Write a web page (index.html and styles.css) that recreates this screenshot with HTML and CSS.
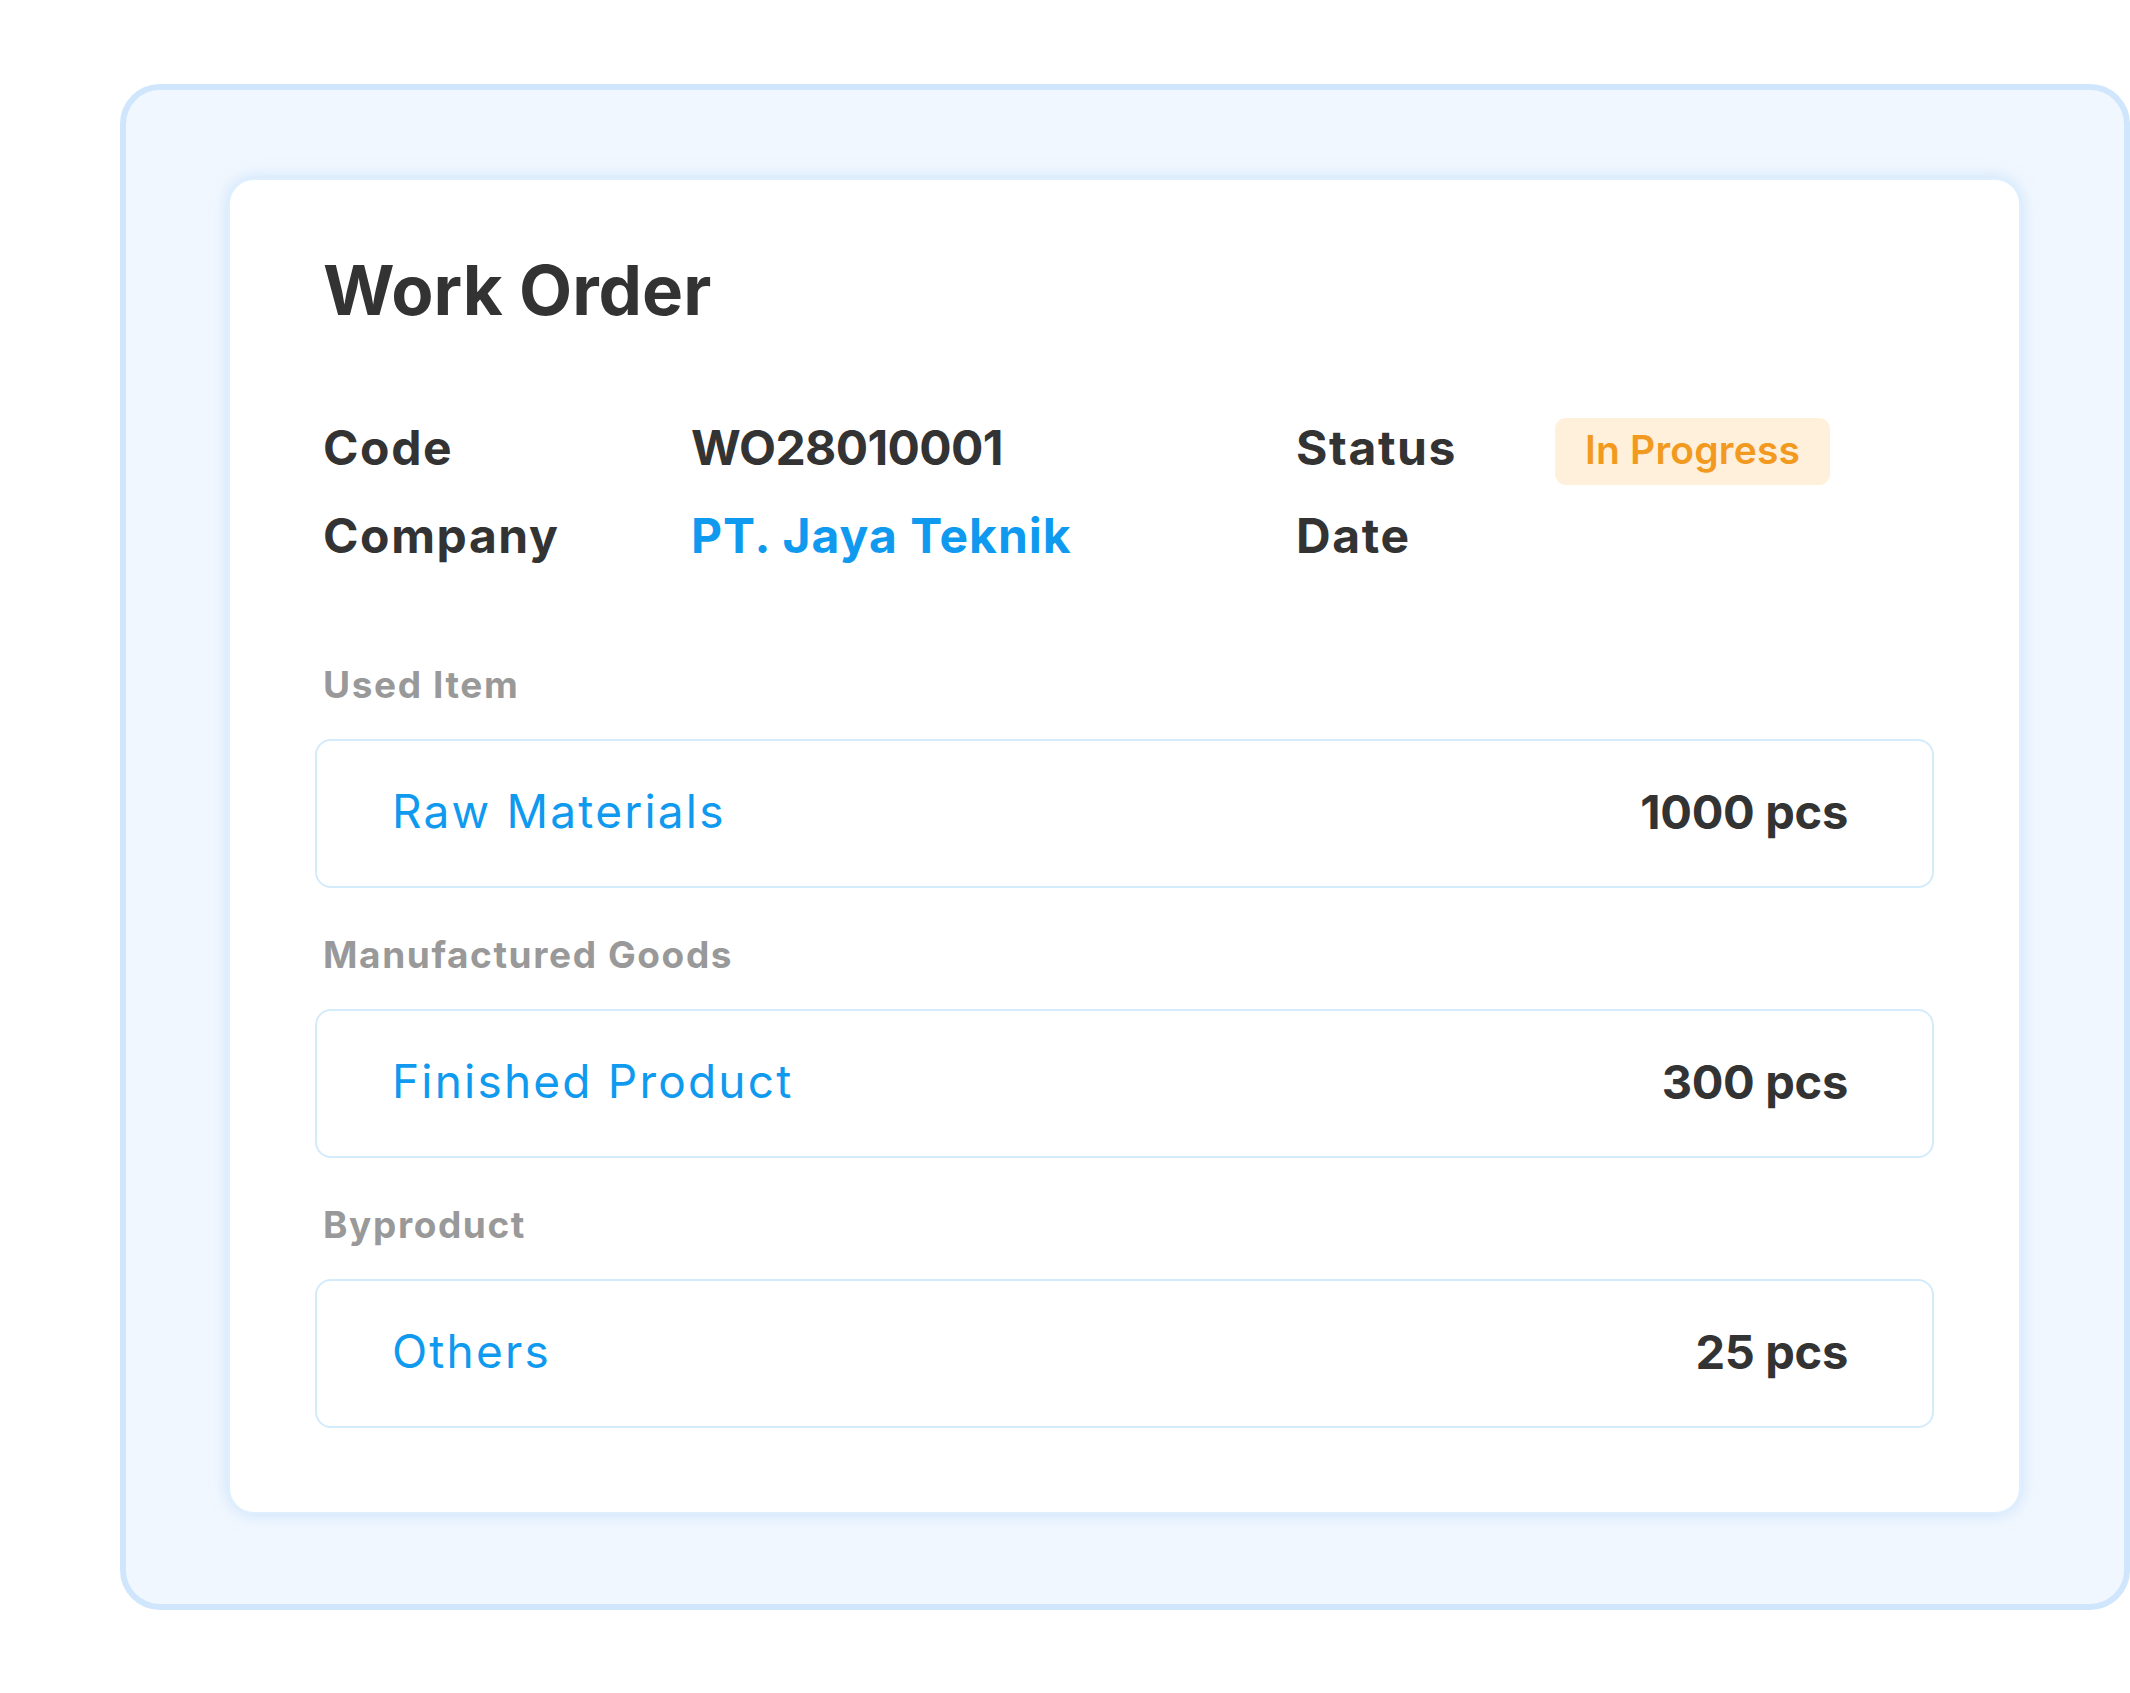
FILE: index.html
```html
<!DOCTYPE html>
<html lang="en">
<head>
<meta charset="utf-8">
<title>Work Order</title>
<link rel="stylesheet" href="styles.css">
</head>
<body>
<div class="frame">
  <section class="card">
    <h1 class="title">Work Order</h1>
    <div class="info">
      <div class="info-label">Code</div>
      <div class="info-value">WO28010001</div>
      <div class="info-label">Status</div>
      <div class="info-extra"><span class="badge">In Progress</span></div>
      <div class="info-label">Company</div>
      <div class="info-value link">PT. Jaya Teknik</div>
      <div class="info-label">Date</div>
      <div class="info-extra"></div>
    </div>

    <div class="section-label">Used Item</div>
    <div class="item-row">
      <span class="item-name">Raw Materials</span>
      <span class="item-qty">1000 pcs</span>
    </div>

    <div class="section-label">Manufactured Goods</div>
    <div class="item-row">
      <span class="item-name">Finished Product</span>
      <span class="item-qty">300 pcs</span>
    </div>

    <div class="section-label">Byproduct</div>
    <div class="item-row">
      <span class="item-name">Others</span>
      <span class="item-qty">25 pcs</span>
    </div>
  </section>
</div>
</body>
</html>
```

FILE: styles.css
```css
* { box-sizing: border-box; }

html, body {
  margin: 0;
  padding: 0;
  background: #ffffff;
  font-family: Inter, "Open Sans", "Liberation Sans", sans-serif;
  color: #333333;
}

body {
  overflow: hidden;
}

.frame {
  margin: 84px 0 0 120px;
  width: 2010px;
  border: 6px solid #cfe6fc;
  border-radius: 40px;
  background: #f1f7fe;
  padding: 90px 105px 92px 104px;
}

.card {
  background: #ffffff;
  border-radius: 24px;
  box-shadow: 0 0 0 2px #e0effd, 0 0 18px rgba(150, 200, 248, 0.6);
  padding: 70px 85px 84px 85px;
}

.title {
  margin: 0 0 0 8px;
  font-size: 69px;
  line-height: 80px;
  font-weight: 700;
  color: #333333;
}

.info {
  margin: 74px 0 0 8px;
  display: grid;
  grid-template-columns: 368px 605px 259px auto;
  grid-auto-rows: 88px;
  align-items: center;
}

.info-label {
  font-size: 48px;
  line-height: 88px;
  font-weight: 700;
  color: #333333;
  letter-spacing: 1.6px;
}

.info-label.wide {
  letter-spacing: 3px;
}

.info-value {
  font-size: 48px;
  line-height: 88px;
  font-weight: 700;
  color: #333333;
  letter-spacing: -0.6px;
}

.info-value.link {
  color: #0f9aef;
  letter-spacing: 1px;
}

.info-extra {
  display: flex;
  align-items: center;
}

.badge {
  display: inline-block;
  margin-top: 7px;
  height: 67px;
  line-height: 64px;
  padding: 0 30px 3px 30px;
  border-radius: 11px;
  background: #fff0dc;
  color: #f29a1f;
  font-size: 39px;
  font-weight: 600;
  letter-spacing: 0.2px;
}

.section-label {
  margin: 42px 0 0 8px;
  font-size: 37px;
  line-height: 50px;
  font-weight: 700;
  color: #999999;
  letter-spacing: 1.6px;
}

.info + .section-label {
  margin-top: 80px;
}

.item-row {
  margin-top: 29px;
  height: 149px;
  border: 2px solid #d4ebfc;
  border-radius: 16px;
  display: flex;
  align-items: center;
  justify-content: space-between;
  padding: 0 84px 5px 75px;
}

.item-name {
  font-size: 46px;
  font-weight: 400;
  color: #0f9aef;
  letter-spacing: 2.2px;
}

.item-qty {
  font-size: 47px;
  font-weight: 700;
  color: #333333;
  letter-spacing: -0.3px;
}
```
